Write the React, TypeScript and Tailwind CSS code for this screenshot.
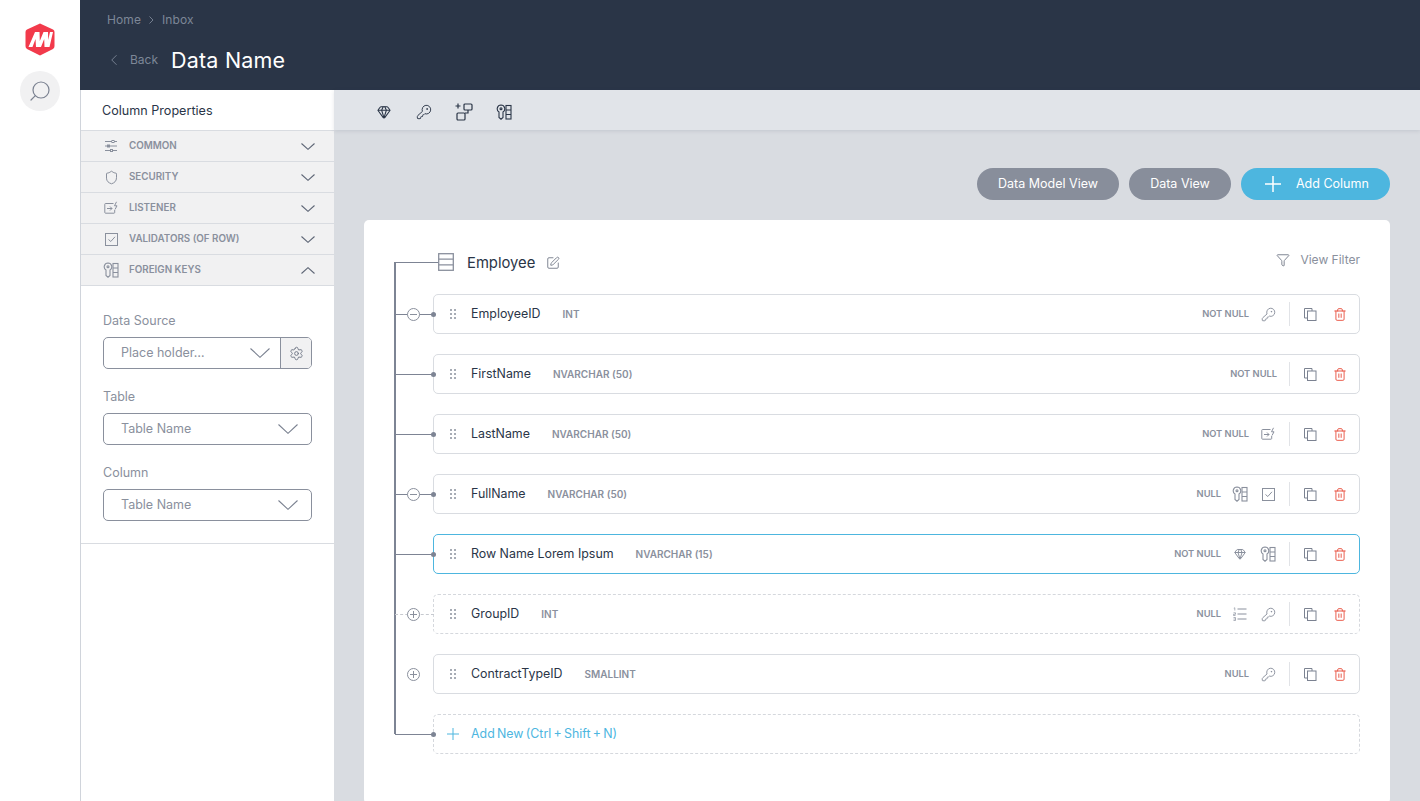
import { ChevronLeft, Funnel, Gem, KeyRound, Search, Settings, Shield, SquarePen, Trash2 } from "lucide-react";
import type { ReactNode } from "react";

const font = { fontFamily: "Inter, 'Liberation Sans', sans-serif" };

function Chevron({ up, w = 14, h = 7, color = "#5d6575" }: { up?: boolean; w?: number; h?: number; color?: string }) {
  return (
    <svg width={w} height={h} viewBox={`0 0 ${w} ${h}`} fill="none" stroke={color} strokeWidth="1.1">
      <path d={up ? `M0.5 ${h - 0.5} L${w / 2} 0.7 L${w - 0.5} ${h - 0.5}` : `M0.5 0.5 L${w / 2} ${h - 0.7} L${w - 0.5} 0.5`} />
    </svg>
  );
}

function Logo() {
  return (
    <svg width="30" height="33" viewBox="0 0 30 33">
      <path d="M15 0.5 L28 6.5 Q29.500 7.200 29.500 9 L29.500 23 Q29.500 25 28 26 L15 32.500 L2 26 Q0.500 25 0.500 23 L0.500 9 Q0.500 7.200 2 6.500 Z" fill="#f23a4b" />
      <path d="M3.500 24 L10 9 H14.500 L14.800 18 L18.500 9 H23 L23.200 17 L25 9 H28 L24.500 24 H19.500 L19.200 16 L16 24 H11 L10.500 16 L7.500 24 Z" fill="#fff" />
    </svg>
  );
}

function SlidersIcon() {
  return (
    <svg width="14" height="14" viewBox="0 0 14 14" fill="none" stroke="#8a909d" strokeWidth="1">
      <path d="M1 2.500h12M1 7h12M1 11.500h12" />
      <rect x="8" y="1.500" width="2" height="2" fill="#f1f1f2" />
      <rect x="3.500" y="6" width="2" height="2" fill="#f1f1f2" />
      <rect x="6.500" y="10.500" width="2" height="2" fill="#f1f1f2" />
    </svg>
  );
}

function ListenerIcon({ color = "#8a909d" }: { color?: string }) {
  return (
    <svg width="14" height="14" viewBox="0 0 14 14" fill="none" stroke={color} strokeWidth="1">
      <path d="M9.500 2.500H1.500a0.700 0.700 0 0 0 -0.700 0.700v8.300a0.700 0.700 0 0 0 0.700 0.700h8.500a0.700 0.700 0 0 0 0.700 -0.700V9" />
      <path d="M3 7.500h5M6 5.500l2 2-2 2" />
      <path d="M12.500 0.800 L10.500 4.800 H13 L11 8.500" />
    </svg>
  );
}

function CheckBoxIcon() {
  return (
    <svg width="13" height="13" viewBox="0 0 13 13" fill="none" stroke="#8a909d" strokeWidth="1">
      <rect x="0.500" y="0.500" width="12" height="12" />
      <path d="M3.500 6.500 L5.800 8.500 L10 3.800" />
    </svg>
  );
}

function ForeignKeyIcon({ color = "#8a909d" }: { color?: string }) {
  return (
    <svg width="16" height="16" viewBox="0 0 16 16" fill="none" stroke={color} strokeWidth="1.1">
      <path d="M5 1a3.800 3.800 0 0 0 -2 7 V13.500 L5 15.200 L7 13.500 V8 A3.800 3.800 0 0 0 5 1Z" />
      <circle cx="5" cy="4.800" r="1" />
      <rect x="10" y="1.500" width="5" height="13.500" />
      <path d="M10 6h5M10 10.500h5" />
    </svg>
  );
}

function AddGroupIcon() {
  return (
    <svg width="18" height="18" viewBox="0 0 18 18" fill="none" stroke="#2a3547" strokeWidth="1.2">
      <path d="M0.500 3h5M3 0.500v5" />
      <rect x="9" y="1" width="8" height="6" rx="1" />
      <rect x="2" y="10" width="8" height="7" rx="1" />
      <path d="M13 7v3h-3" />
    </svg>
  );
}

function ListIcon() {
  return (
    <svg width="14" height="14" viewBox="0 0 14 14" fill="none" stroke="#8a909d" strokeWidth="1">
      <path d="M4.500 2h9M4.500 7h9M4.500 12h9" />
      <path d="M0.800 1.200L1.800 0.800V3.500M0.500 5.800h2v1.500h-2v1.200h2M0.500 10.500h2v3h-2M0.500 12h2" strokeWidth="0.7" />
    </svg>
  );
}

function TableIcon() {
  return (
    <svg width="16" height="18" viewBox="0 0 16 18" fill="none" stroke="#8a909d" strokeWidth="1.300">
      <rect x="0.700" y="0.700" width="14.600" height="16.600" />
      <path d="M0.700 6.200h14.600M0.700 11.800h14.600" />
    </svg>
  );
}

function CopyIcon() {
  return (
    <svg width="13" height="13" viewBox="0 0 13 13" fill="none" stroke="#7b8291" strokeWidth="1">
      <path d="M3 10H0.500V0.500H8V3" />
      <rect x="3.500" y="3" width="8.500" height="9.500" />
    </svg>
  );
}

function Grip() {
  return (
    <svg width="6" height="10" viewBox="0 0 6 10" fill="#8a909d">
      {[1, 5, 9].map((y) => (
        <g key={y}>
          <circle cx="1" cy={y} r="1" />
          <circle cx="5" cy={y} r="1" />
        </g>
      ))}
    </svg>
  );
}

function Toggle({ plus }: { plus?: boolean }) {
  return (
    <span className="absolute left-[-27px] top-[13px] z-10 w-[13px] h-[13px] rounded-full border border-[#8a909d] bg-white flex items-center justify-center">
      <svg width="7" height="7" viewBox="0 0 7 7" stroke="#8a909d" strokeWidth="1">
        <path d={plus ? "M0 3.500h7M3.500 0v7" : "M0 3.500h7"} />
      </svg>
    </span>
  );
}

const accordion = [
  { label: "COMMON", icon: <SlidersIcon /> },
  { label: "SECURITY", icon: <Shield size={15} strokeWidth={1.6} color="#8a909d" /> },
  { label: "LISTENER", icon: <ListenerIcon /> },
  { label: "VALIDATORS (OF ROW)", icon: <CheckBoxIcon /> },
  { label: "FOREIGN KEYS", icon: <ForeignKeyIcon />, open: true },
];

function Select({ text, settings }: { text: string; settings?: boolean }) {
  return (
    <div className="mt-[7px] h-[32px] flex rounded-[5px] border border-[#8a909d] overflow-hidden">
      <div className={`flex-1 flex items-center justify-between pl-[17px] text-[12.500px] text-[#8a909d] ${settings ? "pr-[10px]" : "pr-[13px]"}`}>
        <span className="pt-[1px]">{text}</span>
        <Chevron w={20} h={10} color="#7b8291" />
      </div>
      {settings && (
        <div className="w-[31px] border-l border-[#8a909d] bg-[#f1f1f2] flex items-center justify-center">
          <Settings size={15} strokeWidth={1.500} color="#6f7685" />
        </div>
      )}
    </div>
  );
}

function Field({ label, text, settings }: { label: string; text: string; settings?: boolean }) {
  return (
    <div className="mb-[17px]">
      <div className="h-[20px] leading-[22px] text-[12.500px] text-[#8a909d]">{label}</div>
      <Select text={text} settings={settings} />
    </div>
  );
}

type Row = {
  name: string;
  type: string;
  nullLabel: string;
  icons?: ReactNode[];
  toggle?: "minus" | "plus";
  variant?: "active" | "dashed";
  noConnector?: boolean;
};

const key = <KeyRound size={15} strokeWidth={1.500} color="#8a909d" />;
const gem = <Gem size={12} strokeWidth={2} color="#8a909d" />;

const rows: Row[] = [
  { name: "EmployeeID", type: "INT", nullLabel: "NOT NULL", icons: [key], toggle: "minus" },
  { name: "FirstName", type: "NVARCHAR (50)", nullLabel: "NOT NULL" },
  { name: "LastName", type: "NVARCHAR (50)", nullLabel: "NOT NULL", icons: [<ListenerIcon key="l" />] },
  { name: "FullName", type: "NVARCHAR (50)", nullLabel: "NULL", icons: [<ForeignKeyIcon key="f" />, <CheckBoxIcon key="c" />], toggle: "minus" },
  { name: "Row Name Lorem Ipsum", type: "NVARCHAR (15)", nullLabel: "NOT NULL", icons: [gem, <ForeignKeyIcon key="f" />], variant: "active" },
  { name: "GroupID", type: "INT", nullLabel: "NULL", icons: [<ListIcon key="l" />, key], toggle: "plus", variant: "dashed" },
  { name: "ContractTypeID", type: "SMALLINT", nullLabel: "NULL", icons: [key], toggle: "plus", noConnector: true },
];

function ColumnRow({ row }: { row: Row }) {
  const border =
    row.variant === "active"
      ? "border border-[#4db6df]"
      : row.variant === "dashed"
        ? "border border-dashed border-[#d5d8dd]"
        : "border border-[#d9dce1]";
  return (
    <div className={`relative h-[40px] rounded-[5px] flex items-center pl-[16px] pr-[12px] ${border}`}>
      {row.variant === "dashed" ? (
        <span className="absolute left-[-39px] top-[19px] w-[39px] border-t border-dashed border-[#c6c9cf]" />
      ) : (
        !row.noConnector && <span className="absolute left-[-39px] top-[19px] w-[39px] h-px bg-[#7d8494]" />
      )}
      {!row.noConnector && row.variant !== "dashed" && (
        <span className="absolute left-[-3px] top-[17px] w-[5px] h-[5px] rounded-full bg-[#7d8494]" />
      )}
      {row.toggle && <Toggle plus={row.toggle === "plus"} />}
      <Grip />
      <span className="ml-[15px] pt-[1px] text-[12.400px] text-[#2a3547]">{row.name}</span>
      <span className="ml-[22px] pt-[1px] text-[10px] font-semibold text-[#8a909d]">{row.type}</span>
      <div className="ml-auto flex items-center">
        <span className="text-[9.300px] font-semibold text-[#8a909d] mr-[1px]">{row.nullLabel}</span>
        {(row.icons ?? []).map((icon, i) => (
          <span key={i} className="w-[28px] flex justify-center translate-x-[4px]">
            {icon}
          </span>
        ))}
        <span className="ml-[11px] w-px h-[24px] bg-[#e1e3e7]" />
        <span className="ml-[13px] w-[14px] flex justify-center">
          <CopyIcon />
        </span>
        <span className="ml-[16px] w-[14px] flex justify-center">
          <Trash2 size={15} strokeWidth={1.600} color="#e8513f" />
        </span>
      </div>
    </div>
  );
}

export default function App() {
  return (
    <div className="flex h-screen overflow-hidden bg-white" style={font}>
      <aside className="w-[80px] shrink-0 flex flex-col items-center pt-[23px]">
        <Logo />
        <div className="mt-[15px] w-[40px] h-[40px] rounded-full bg-[#f1f1f2] flex items-center justify-center">
          <Search size={24} strokeWidth={1.200} color="#7b8291" className="-scale-x-100" />
        </div>
      </aside>

      <div className="flex-1 flex flex-col min-w-0">
        <header className="h-[90px] shrink-0 bg-[#2a3547] pl-[27px]">
          <div className="pt-[9px] h-[31px] flex items-center gap-[8px] text-[12px] tracking-[0.1px] text-[#7d8797]">
            <span>Home</span>
            <svg width="5" height="8" viewBox="0 0 5 8" fill="none" stroke="#7d8797" strokeWidth="0.900">
              <path d="M0.500 0.500L4 4L0.500 7.500" />
            </svg>
            <span>Inbox</span>
          </div>
          <div className="mt-[13px] flex items-center">
            <ChevronLeft size={18} strokeWidth={1.200} color="#7d8797" className="-ml-[2px]" />
            <span className="ml-[7px] text-[12px] text-[#7d8797]">Back</span>
            <span className="ml-[13px] text-[21.500px] tracking-[0.2px] text-white">Data Name</span>
          </div>
        </header>

        <div className="flex-1 flex min-h-0">
          <section className="w-[254px] shrink-0 border-l border-[#d0d4db] bg-white">
            <div className="h-[40px] flex items-center pl-[21px] pt-[2px] text-[12.600px] text-[#2a3547]">Column Properties</div>
            {accordion.map((a) => (
              <div
                key={a.label}
                className={`bg-[#f1f1f2] border-t border-[#d9dce1] flex items-center pl-[22px] pr-[19px] ${a.open ? "h-[32px] border-b" : "h-[31px]"}`}
              >
                <span className="w-[16px] flex justify-center">{a.icon}</span>
                <span className="ml-[10px] pt-[1px] text-[9.800px] font-semibold text-[#8a909d]">{a.label}</span>
                <span className="ml-auto">
                  <Chevron up={a.open} />
                </span>
              </div>
            ))}
            <div className="pt-[24px] pl-[22px] pr-[22px] pb-[5px] border-b border-[#d9dce1]">
              <Field label="Data Source" text="Place holder…" settings />
              <Field label="Table" text="Table Name" />
              <Field label="Column" text="Table Name" />
            </div>
          </section>

          <main className="flex-1 min-w-0 flex flex-col bg-[#d9dce1]">
            <div className="h-[40px] shrink-0 bg-[#e1e4e9] shadow-[0_1px_4px_rgba(42,53,71,0.12)] flex items-center pl-[40px] pt-[4px] gap-[20px] text-[#2a3547]">
              <span className="w-[20px] flex justify-center"><Gem size={14} strokeWidth={1.800} color="#2a3547" /></span>
              <span className="w-[20px] flex justify-center"><KeyRound size={16} strokeWidth={1.400} color="#2a3547" /></span>
              <span className="w-[20px] flex justify-center"><AddGroupIcon /></span>
              <span className="w-[20px] flex justify-center"><ForeignKeyIcon color="#2a3547" /></span>
            </div>

            <div className="flex-1 min-h-0 pl-[30px] pr-[30px] pt-[38px]">
              <div className="flex justify-end gap-[10px] text-[12.500px] text-white">
                <button className="h-[32px] w-[142px] rounded-full bg-[#888e9b] pt-[1px]">Data Model View</button>
                <button className="h-[32px] w-[102px] rounded-full bg-[#888e9b] pt-[1px]">Data View</button>
                <button className="h-[32px] w-[149px] rounded-full bg-[#4db6df] flex items-center pl-[23px]">
                  <svg width="18" height="18" viewBox="0 0 18 18" stroke="#fff" strokeWidth="1.500">
                    <path d="M1 9h16M9 1v16" />
                  </svg>
                  <span className="ml-[14px] pt-[1px]">Add Column</span>
                </button>
              </div>

              <div className="mt-[20px] bg-white rounded-[5px] pl-[69px] pr-[30px] pt-[30px] pb-[50px] relative">
                <span className="absolute left-[30px] top-[42px] w-[1.500px] h-[472px] bg-[#7d8494]" />
                <span className="absolute left-[30px] top-[42px] w-[44px] h-px bg-[#7d8494]" />
                <div className="h-[24px] flex items-center">
                  <span className="ml-[5px] flex"><TableIcon /></span>
                  <span className="ml-[13px] pt-[2px] text-[14.800px] text-[#2a3547]">Employee</span>
                  <SquarePen size={14} strokeWidth={1.500} color="#6f7685" className="ml-[11px] mt-[2px]" />
                  <div className="ml-auto flex items-center text-[12px] text-[#8a909d] -mt-[5px]">
                    <Funnel size={14} strokeWidth={1.500} color="#6f7685" />
                    <span className="ml-[10px]">View Filter</span>
                  </div>
                </div>
                <div className="mt-[20px] flex flex-col gap-[20px]">
                  {rows.map((r) => (
                    <ColumnRow key={r.name} row={r} />
                  ))}
                  <div className="relative h-[40px] rounded-[5px] border border-dashed border-[#d5d8dd] flex items-center pl-[13px]">
                    <span className="absolute left-[-39px] top-[19px] w-[39px] h-px bg-[#7d8494]" />
                    <span className="absolute left-[-3px] top-[17px] w-[5px] h-[5px] rounded-full bg-[#7d8494]" />
                    <svg width="12" height="12" viewBox="0 0 12 12" stroke="#4db6df" strokeWidth="1">
                      <path d="M0 6h12M6 0v12" />
                    </svg>
                    <span className="ml-[12px] pt-[1px] text-[12.400px] [word-spacing:-1.200px] text-[#4db6df]">Add New (Ctrl + Shift + N)</span>
                  </div>
                </div>
              </div>
            </div>
          </main>
        </div>
      </div>
    </div>
  );
}
